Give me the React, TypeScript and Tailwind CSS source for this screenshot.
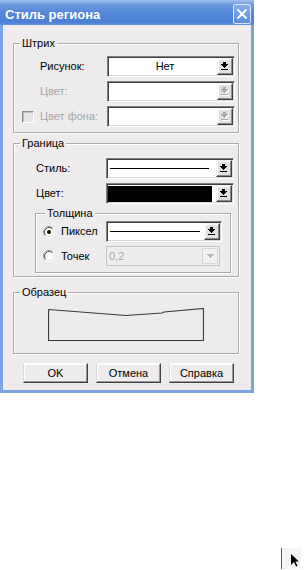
import React from "react";

function DropGlyph({ disabled }: { disabled?: boolean }) {
  const c = disabled ? "#a9a9a9" : "#000";
  const shape = (
    <>
      <rect x="2" y="0" width="3" height="2" />
      <rect x="0" y="2" width="7" height="1" />
      <rect x="1" y="3" width="5" height="1" />
      <rect x="2" y="4" width="3" height="1" />
      <rect x="3" y="5" width="1" height="1" />
      <rect x="0" y="7" width="7" height="1" />
    </>
  );
  return (
    <svg width="8" height="9" viewBox="0 0 8 9" shapeRendering="crispEdges">
      {disabled && (
        <g fill="#fff" transform="translate(1,1)">
          {shape}
        </g>
      )}
      <g fill={c}>{shape}</g>
    </svg>
  );
}

function DropButton({ disabled }: { disabled?: boolean }) {
  return (
    <div className="flex h-full w-[16px] shrink-0 items-center justify-center border border-t-[#f4f4f4] border-l-[#f4f4f4] border-b-[#404040] border-r-[#404040] bg-[#e2e0e0] shadow-[inset_-1px_-1px_0_#8c8c8c,inset_1px_1px_0_#fff]">
      <DropGlyph disabled={disabled} />
    </div>
  );
}

function Combo({
  className,
  children,
  disabled,
}: {
  className: string;
  children?: React.ReactNode;
  disabled?: boolean;
}) {
  return (
    <div
      className={
        "flex h-[21px] shrink-0 border border-t-[#808080] border-l-[#808080] border-b-white border-r-white bg-white p-[1px] shadow-[inset_1px_1px_0_#404040,inset_-1px_-1px_0_#d8d6d6] " +
        className
      }
    >
      <div className="flex min-w-0 flex-1 items-center">{children}</div>
      <DropButton disabled={disabled} />
    </div>
  );
}

function Radio({ checked }: { checked?: boolean }) {
  return (
    <svg width="12" height="12" viewBox="0 0 12 12" className="shrink-0">
      <circle cx="6" cy="6" r="5.5" fill="#fff" stroke="#fff" />
      <path d="M2.11 9.89 A5.5 5.5 0 0 1 9.89 2.11" fill="none" stroke="#9a9a9a" />
      <path d="M2.82 9.18 A4.5 4.5 0 0 1 9.18 2.82" fill="none" stroke="#505050" />
      <path d="M9.18 2.82 A4.5 4.5 0 0 1 2.82 9.18" fill="none" stroke="#dcdada" />
      {checked && <circle cx="6" cy="6" r="2" fill="#000" />}
    </svg>
  );
}

function Label({ className, children }: { className: string; children: React.ReactNode }) {
  return <div className={"shrink-0 text-[11px] leading-[13px] " + className}>{children}</div>;
}

function PushButton({ children }: { children: React.ReactNode }) {
  return (
    <div className="flex h-[20px] w-[65px] items-center justify-center border border-t-[#fafafa] border-l-[#d8d6d6] border-b-[#404040] border-r-[#404040] bg-[#edebeb] text-[11px] leading-[13px] text-black shadow-[inset_-1px_-1px_0_#9a9898,inset_1px_1px_0_#fff]">
      {children}
    </div>
  );
}

export default function App() {
  return (
    <div className="flex h-[570px] w-[304px] flex-col bg-white font-[Liberation_Sans,Arial,sans-serif] text-black">
      <div className="flex w-[254px] flex-col">
        {/* title bar */}
        <div className="flex h-[25px] items-start bg-[linear-gradient(to_bottom,#a3c2ef,#6d9ae0_18%,#5488d9_50%,#4a80d4_88%,#6592dc)]">
          <div className="flex-1 pl-[5px] pt-[7px] text-[13px] font-bold leading-[15px] text-white">
            Стиль региона
          </div>
          <div className="mr-[3px] mt-[4px] flex h-[20px] w-[18px] items-center justify-center rounded-[2px] border border-[#dbe7f9] bg-[linear-gradient(to_bottom,#86aeea,#5a8ddc)]">
            <svg width="12" height="12" viewBox="0 0 12 12">
              <path d="M1.5 1.5 L10.5 10.5 M10.5 1.5 L1.5 10.5" stroke="#fff" strokeWidth="2" />
            </svg>
          </div>
        </div>

        {/* body */}
        <div className="flex flex-col border-x-[3px] border-b-[3px] border-[#7ba3e2] bg-[#edebeb] pb-[7px] pl-[10px] pt-[12px]">
          {/* Штрих */}
          <fieldset className="w-[226px] border border-[#aaa8a8] pb-[5px] pt-[6px] shadow-[inset_1px_1px_0_#fff,1px_1px_0_#fff]">
            <legend className="ml-[6px] bg-[#edebeb] px-[2px] text-[11px] leading-[13px]">Штрих</legend>
            <div className="flex flex-col gap-[4px]">
              <div className="flex items-center pl-[8px]">
                <div className="w-[18px] shrink-0" />
                <Label className="w-[67px]">Рисунок:</Label>
                <Combo className="w-[128px]">
                  <div className="w-full pl-[4px] text-center text-[11px] leading-[13px]">Нет</div>
                </Combo>
              </div>
              <div className="flex items-center pl-[8px]">
                <div className="w-[18px] shrink-0" />
                <Label className="w-[67px] text-[#a9a7a7]">Цвет:</Label>
                <Combo className="w-[128px]" disabled />
              </div>
              <div className="flex items-center pl-[8px]">
                <div className="w-[18px] shrink-0">
                  <div className="h-[12px] w-[12px] border border-t-[#8a8a8a] border-l-[#8a8a8a] border-b-white border-r-white bg-[#e6e4e4] shadow-[inset_1px_1px_0_#bdbbbb]" />
                </div>
                <Label className="w-[67px] text-[#a9a7a7]">Цвет фона:</Label>
                <Combo className="w-[128px]" disabled />
              </div>
            </div>
          </fieldset>

          {/* Граница */}
          <fieldset className="mt-[4px] w-[226px] border border-[#aaa8a8] pb-[3px] pt-[8px] shadow-[inset_1px_1px_0_#fff,1px_1px_0_#fff]">
            <legend className="ml-[6px] bg-[#edebeb] px-[2px] text-[11px] leading-[13px]">Граница</legend>
            <div className="flex flex-col gap-[4px]">
              <div className="flex items-center pl-[22px]">
                <Label className="w-[70px]">Стиль:</Label>
                <Combo className="w-[128px]">
                  <div className="ml-[2px] mr-[7px] h-[1px] flex-1 bg-black" />
                </Combo>
              </div>
              <div className="flex items-center pl-[22px]">
                <Label className="w-[70px]">Цвет:</Label>
                <Combo className="w-[128px]">
                  <div className="my-[1px] mr-[4px] h-[16px] flex-1 bg-black" />
                </Combo>
              </div>
            </div>

            {/* Толщина */}
            <fieldset className="ml-[21px] mt-[3px] w-[196px] border border-[#aaa8a8] pb-[6px] pt-[1px] shadow-[inset_1px_1px_0_#fff,1px_1px_0_#fff]">
              <legend className="ml-[9px] bg-[#edebeb] px-[2px] text-[11px] leading-[13px]">Толщина</legend>
              <div className="flex flex-col gap-[4px]">
                <div className="flex items-center pl-[7px]">
                  <Radio checked />
                  <Label className="ml-[6px] w-[45px]">Пиксел</Label>
                  <Combo className="w-[116px]">
                    <div className="ml-[2px] mr-[4px] h-[1px] flex-1 bg-black" />
                  </Combo>
                </div>
                <div className="flex items-center pl-[7px]">
                  <Radio />
                  <Label className="ml-[6px] w-[45px]">Точек</Label>
                  <div className="flex h-[20px] w-[114px] border border-[#c6c4c4] bg-[#edebeb] p-[1px]">
                    <div className="flex flex-1 items-center pl-[1px] text-[11px] leading-[13px] text-[#a9a7a7]">0,2</div>
                    <div className="flex w-[16px] items-center justify-center border border-[#d6d4d4] bg-[#f1efef]">
                      <svg width="7" height="4" viewBox="0 0 7 4" shapeRendering="crispEdges">
                        <path d="M0 0h7v1h-1v1h-1v1h-1v1h-1v-1h-1v-1h-1v-1h-1z" fill="#b4b2b2" />
                      </svg>
                    </div>
                  </div>
                </div>
              </div>
            </fieldset>
          </fieldset>

          {/* Образец */}
          <fieldset className="mt-[9px] w-[226px] border border-[#aaa8a8] pb-[12px] pt-[9px] shadow-[inset_1px_1px_0_#fff,1px_1px_0_#fff]">
            <legend className="ml-[6px] bg-[#edebeb] px-[2px] text-[11px] leading-[13px]">Образец</legend>
            <div className="flex justify-center">
              <svg width="156" height="33" viewBox="0 0 156 33">
                <polyline
                  points="0.5,1.5 78,7.5 114,5 116,4 155.5,0.5 155.5,32.5 0.5,32.5 0.5,1.5"
                  fill="none"
                  stroke="#3a3a3a"
                  strokeWidth="1.2"
                />
              </svg>
            </div>
          </fieldset>

          {/* buttons */}
          <div className="ml-[10px] mt-[9px] flex gap-[8px]">
            <PushButton>OK</PushButton>
            <PushButton>Отмена</PushButton>
            <PushButton>Справка</PushButton>
          </div>
        </div>
      </div>

      <div className="flex-1" />

      <div className="flex justify-end pb-[1px] pr-[3px]">
        <div className="flex h-[21px] w-[20px] items-start border-l border-[#5a5a5a] bg-[#f6f6f6] pl-[9px] pt-[6px]">
          <svg width="9" height="14" viewBox="0 0 9 14">
            <path d="M0 0 L0 11 L3 8 L5 12.5 L6.5 12 L4.5 7.5 L8 7.5 Z" fill="#000" />
          </svg>
        </div>
      </div>
    </div>
  );
}
